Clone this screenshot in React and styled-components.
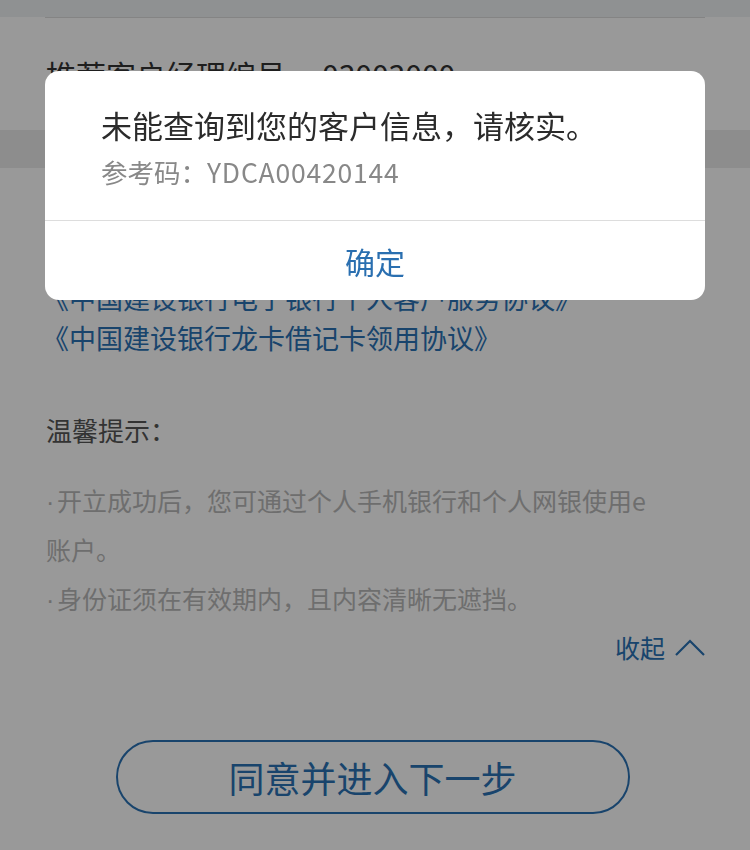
import React from 'react'
import styled, { createGlobalStyle } from 'styled-components'

const GlobalStyle = createGlobalStyle`
  html, body {
    margin: 0;
    padding: 0;
    background: #ffffff;
    font-family: "Noto Sans CJK SC", "Noto Sans", sans-serif;
  }
  * { box-sizing: border-box; }
`

const Page = styled.div`
  width: 750px;
  height: 850px;
  overflow: hidden;
  background: #ffffff;
`

const TopStrip = styled.div`
  height: 17px;
  background: #eef2f3;
`

const Divider = styled.div`
  height: 1px;
  margin: 0 45px;
  background: #dcdcdc;
`

const InfoRow = styled.div`
  height: 112px;
  display: flex;
  align-items: center;
  padding-left: 46px;
  font-size: 30px;
  color: #333333;
`

const InfoValue = styled.span`
  margin-left: 36px;
`

const Band = styled.div`
  height: 38px;
  background: #ececec;
`

const Content = styled.div`
  padding: 110px 45px 0 46px;
`

const AgreementLink = styled.div`
  font-size: 27px;
  line-height: 40px;
  color: #2a72b5;
  margin-left: -4px;
`

const TipsTitle = styled.div`
  margin-top: 52px;
  font-size: 26px;
  line-height: 40px;
  color: #555555;
`

const TipsBody = styled.p`
  margin: 26px 0 0;
  max-width: 610px;
  font-size: 25px;
  line-height: 49px;
  color: #b8b8b8;
`

const Dot = styled.span`
  display: inline-block;
  width: 11px;
  font-family: "Liberation Sans", sans-serif;
  line-height: 1;
`

const CollapseRow = styled.div`
  margin-top: 4px;
  display: flex;
  justify-content: flex-end;
  align-items: center;
  gap: 10px;
  font-size: 25px;
  line-height: 40px;
  color: #2a72b5;
`

const ButtonRow = styled.div`
  margin-top: 73px;
  display: flex;
  justify-content: center;
  padding-right: 2px;
`

const NextButton = styled.button`
  width: 514px;
  height: 74px;
  border: 2px solid #2a72b5;
  border-radius: 37px;
  background: transparent;
  font-family: inherit;
  font-size: 36px;
  color: #2a72b5;
  display: flex;
  align-items: center;
  justify-content: center;
  margin-left: -4px;
`

const Overlay = styled.div`
  position: fixed;
  inset: 0;
  background: rgba(0, 0, 0, 0.4);
`

const Dialog = styled.div`
  position: fixed;
  top: 71px;
  left: 45px;
  width: 660px;
  background: #ffffff;
  border-radius: 14px;
  overflow: hidden;
`

const DialogBody = styled.div`
  padding: 34px 40px 30px 56px;
  border-bottom: 1px solid #dddddd;
`

const DialogTitle = styled.div`
  font-size: 31px;
  line-height: 40px;
  color: #2b2b2b;
`

const DialogCode = styled.div`
  margin-top: 9px;
  font-size: 26.5px;
  line-height: 36px;
  color: #888888;
`

const CodeValue = styled.span`
  letter-spacing: 0.8px;
`

const DialogAction = styled.div`
  height: 79px;
  display: flex;
  align-items: center;
  justify-content: center;
  font-size: 30px;
  color: #2a6fb0;
`

function ChevronUp () {
  return (
    <svg width='30' height='18' viewBox='0 0 30 18'>
      <polyline points='1,17 15,3 29,17' fill='none' stroke='#2a72b5' strokeWidth='2.2' />
    </svg>
  )
}

export default function App () {
  return (
    <>
      <GlobalStyle />
      <Page>
        <TopStrip />
        <Divider />
        <InfoRow>
          推荐客户经理编号<InfoValue>03003000</InfoValue>
        </InfoRow>
        <Band />
        <Content>
          <AgreementLink>《中国建设银行电子银行个人客户服务协议》</AgreementLink>
          <AgreementLink>《中国建设银行龙卡借记卡领用协议》</AgreementLink>
          <TipsTitle>温馨提示：</TipsTitle>
          <TipsBody>
            <Dot>·</Dot>开立成功后，您可通过个人手机银行和个人网银使用e账户。
            <br />
            <Dot>·</Dot>身份证须在有效期内，且内容清晰无遮挡。
          </TipsBody>
          <CollapseRow>
            收起
            <ChevronUp />
          </CollapseRow>
          <ButtonRow>
            <NextButton type='button'>同意并进入下一步</NextButton>
          </ButtonRow>
        </Content>
      </Page>
      <Overlay />
      <Dialog>
        <DialogBody>
          <DialogTitle>未能查询到您的客户信息，请核实。</DialogTitle>
          <DialogCode>参考码：<CodeValue>YDCA00420144</CodeValue></DialogCode>
        </DialogBody>
        <DialogAction>确定</DialogAction>
      </Dialog>
    </>
  )
}
